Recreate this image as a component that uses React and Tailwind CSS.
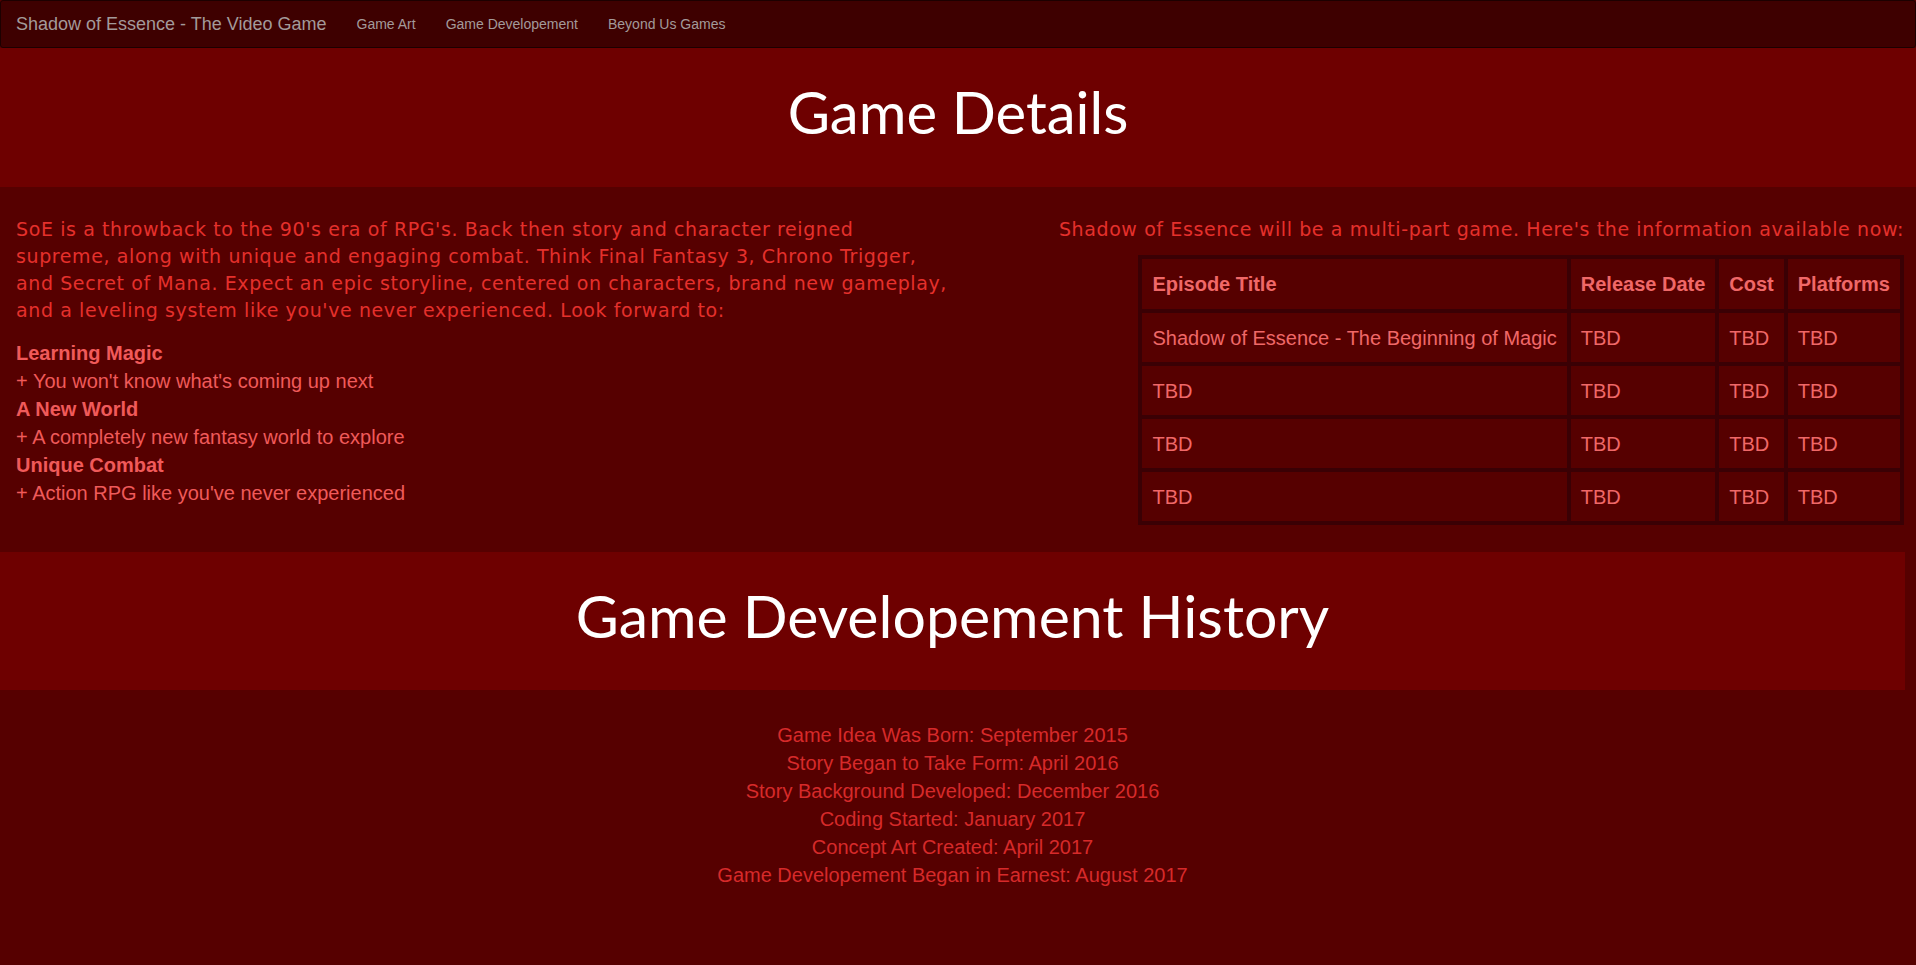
import React from "react";

const features = [
  ["Learning Magic", "+ You won't know what's coming up next"],
  ["A New World", "+ A completely new fantasy world to explore"],
  ["Unique Combat", "+ Action RPG like you've never experienced"],
];

const rows = [
  ["Shadow of Essence - The Beginning of Magic", "TBD", "TBD", "TBD"],
  ["TBD", "TBD", "TBD", "TBD"],
  ["TBD", "TBD", "TBD", "TBD"],
  ["TBD", "TBD", "TBD", "TBD"],
];

const history = [
  "Game Idea Was Born: September 2015",
  "Story Began to Take Form: April 2016",
  "Story Background Developed: December 2016",
  "Coding Started: January 2017",
  "Concept Art Created: April 2017",
  "Game Developement Began in Earnest: August 2017",
];

const arial = { fontFamily: '"Liberation Sans", Arial, sans-serif' };
const verdana = { fontFamily: '"DejaVu Sans", Verdana, sans-serif' };
const gill = { fontFamily: 'Lato, "Open Sans", sans-serif' };

export default function App() {
  return (
    <div className="min-h-screen bg-[#560000]" style={arial}>
      <nav className="h-12 bg-[#3e0000] border border-[#1c0000] rounded-[3px] flex items-center">
        <span className="pl-[15px] pr-[15px] text-[18px] text-[#a39a9a]">
          Shadow of Essence - The Video Game
        </span>
        <a className="px-[15px] text-[14px] text-[#a39a9a]">Game Art</a>
        <a className="px-[15px] text-[14px] text-[#a39a9a]">Game Developement</a>
        <a className="px-[15px] text-[14px] text-[#a39a9a]">Beyond Us Games</a>
      </nav>

      <div className="h-[139px] bg-[#6e0000] flex items-center justify-center">
        <h1 className="text-[58px] text-white pb-[12px]" style={gill}>
          Game Details
        </h1>
      </div>

      <div className="flex w-[1905px]">
        <div className="w-[980px] pl-4 pt-[29px] pb-[26px]">
          <p
            className="text-[19px] leading-[27px] tracking-[0.6px] text-[#e5302c] mb-[15px]"
            style={verdana}
          >
            SoE is a throwback to the 90's era of RPG's. Back then story and
            character reigned
            <br />
            supreme, along with unique and engaging combat. Think Final Fantasy
            3, Chrono Trigger,
            <br />
            and Secret of Mana. Expect an epic storyline, centered on
            characters, brand new gameplay,
            <br />
            and a leveling system like you've never experienced. Look forward
            to:
          </p>
          <div className="text-[20px] leading-[28px] text-[#f05a5a]">
            {features.map(([h, d]) => (
              <div key={h}>
                <div className="font-bold">{h}</div>
                <div>{d}</div>
              </div>
            ))}
          </div>
        </div>
        <div className="flex-1 flex flex-col items-end pt-[29px] pr-[1px] pb-[27px]">
          <p
            className="text-[19px] leading-[27px] tracking-[0.6px] text-[#e5302c] mb-[12px] text-right whitespace-nowrap"
            style={verdana}
          >
            Shadow of Essence will be a multi-part game. Here's the information
            available now:
          </p>
          <table className="border-separate border-spacing-[4px] bg-[#3a0004] text-[20px] text-[#f06868]">
            <thead>
              <tr>
                {["Episode Title", "Release Date", "Cost", "Platforms"].map(
                  (h) => (
                    <th
                      key={h}
                      className="bg-[#560000] h-[50px] px-[10px] text-left font-bold"
                    >
                      {h}
                    </th>
                  )
                )}
              </tr>
            </thead>
            <tbody>
              {rows.map((r, i) => (
                <tr key={i}>
                  {r.map((c, j) => (
                    <td
                      key={j}
                      className="bg-[#560000] h-[49px] px-[10px] text-left"
                    >
                      {c}
                    </td>
                  ))}
                </tr>
              ))}
            </tbody>
          </table>
        </div>
      </div>

      <div className="w-[1905px] h-[138px] bg-[#6e0000] flex items-center justify-center">
        <h1 className="text-[59px] text-white pb-[10px]" style={gill}>
          Game Developement History
        </h1>
      </div>

      <div className="w-[1905px] pt-[31px] pb-[60px] text-center text-[20px] leading-[28px] text-[#d62a2a]">
        {history.map((h) => (
          <div key={h}>{h}</div>
        ))}
      </div>
    </div>
  );
}
